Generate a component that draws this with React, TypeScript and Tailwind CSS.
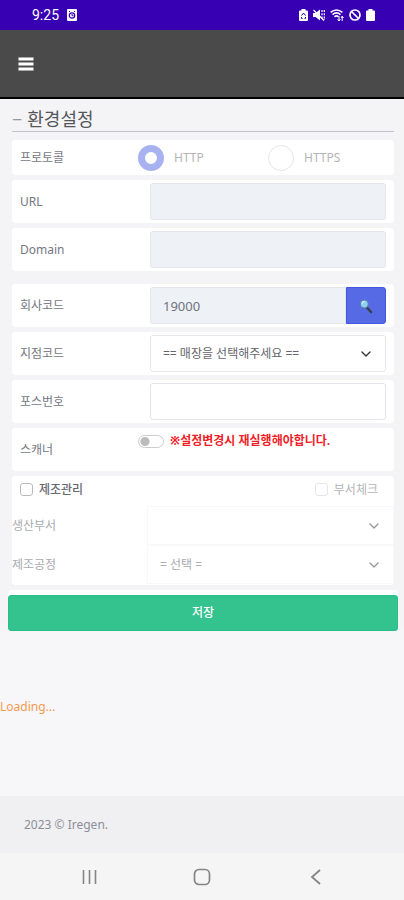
import type { ReactNode } from "react";
import { ChevronDown } from "lucide-react";

const inputClass = "h-[37px] w-full min-w-0 rounded-[3px] border border-[#e2e5ec] px-3 text-[13px] text-[#70747d]";

function StatusBar() {
  return (
    <div className="flex h-[30px] items-center justify-between bg-[#3700b3] pl-8 pr-[29px] text-white">
      <div className="flex items-center gap-2">
        <span className="font-[Roboto] text-sm">9:25</span>
        <svg className="h-3 w-[10px]" viewBox="0 0 10 12" fill="none">
          <rect width="10" height="12" rx="1" fill="#fff" />
          <circle cx="5" cy="6.5" r="2.7" stroke="#3700b3" strokeWidth="1.2" />
          <path d="M5 5v1.7h1.5M2 2.5h1M7 2.5h1" stroke="#3700b3" strokeWidth="1" />
        </svg>
      </div>
      <div className="flex items-center gap-[5px]">
        <svg className="h-3 w-[9px]" viewBox="0 0 9 12">
          <path d="M2.5 1.5V0h4v1.5H8q1 0 1 1V11q0 1-1 1H1q-1 0-1-1V2.5q0-1 1-1z" fill="#fff" />
          <path d="M2.5 6.5 4.5 4l2 2.5M2.5 8v1.5h1M6.5 8v1.5h-1" stroke="#3700b3" fill="none" />
        </svg>
        <svg className="h-3 w-3" viewBox="0 0 12 12" fill="none" stroke="#fff">
          <path d="M0 4h2.5L7 .5v11L2.5 8H0z" fill="#fff" stroke="none" />
          <path d="M.5 1 11 11.5" strokeWidth="1.3" />
          <path d="M9 1v9M11.3 1v10" strokeDasharray="2 1.2" strokeWidth="1.2" />
        </svg>
        <svg className="h-3 w-[14px]" viewBox="0 0 14 12" fill="none" stroke="#fff">
          <path d="M.6 3.4Q6.5-1.3 12.4 3.4M2.5 5.6q4-3.3 8 0M4.5 7.8q2-1.7 4 0" strokeWidth="1.6" />
          <path d="M9 7v5M7.6 10.2 9 12l1.3-1.8M12.2 12V7.2M11 9l1.2-1.8L13.5 9" strokeWidth="1" />
        </svg>
        <svg className="h-3 w-3" viewBox="0 0 12 12" fill="none" stroke="#fff" strokeWidth="1.7">
          <circle cx="6" cy="6" r="5" />
          <path d="m2.5 2.5 7 7" />
        </svg>
        <svg className="h-3 w-[9px]" viewBox="0 0 9 12">
          <path d="M2.5 1.5V0h4v1.5H8q1 0 1 1V11q0 1-1 1H1q-1 0-1-1V2.5q0-1 1-1z" fill="#fff" />
        </svg>
      </div>
    </div>
  );
}

function Row({ id, label, children }: { id: string; label: string; children: ReactNode }) {
  return (
    <div className="flex h-[43px] items-center rounded-[4px] bg-white px-2">
      <label htmlFor={id} className="w-[130px] shrink-0 text-[#74777f]">{label}</label>
      <div className="flex min-w-0 flex-1">{children}</div>
    </div>
  );
}

function Select({ id, text, className, disabled }: { id: string; text: string; className: string; disabled?: boolean }) {
  return (
    <div className="relative min-w-0 flex-1">
      <select id={id} disabled={disabled} className={`w-full appearance-none border bg-white px-3 opacity-100 ${className}`}>
        <option>{text}</option>
      </select>
      <ChevronDown
        className={`pointer-events-none absolute right-3 top-1/2 h-4 w-4 -translate-y-1/2 ${disabled ? "text-[#999]" : "text-[#333]"}`}
      />
    </div>
  );
}

function Radio({ label, checked }: { label: string; checked?: boolean }) {
  return (
    <label className="flex w-[130px] shrink-0 items-center gap-[10px] text-[#b4b5b9]">
      <input
        type="radio"
        name="protocol"
        disabled
        defaultChecked={checked}
        className="h-[26px] w-[26px] appearance-none rounded-full border border-[#e6e6e8] bg-white checked:border-[7px] checked:border-[#a9b2f0]"
      />
      {label}
    </label>
  );
}

export default function App() {
  return (
    <div className="flex min-h-screen flex-col bg-[#f7f7f9] font-['Noto_Sans','Noto_Sans_CJK_KR',sans-serif] text-xs">
      <StatusBar />
      <header className="flex h-[69px] items-center border-b-2 border-black bg-[#4a4a4a] px-[18px]">
        <button aria-label="메뉴" className="flex h-4 w-4 items-center">
          <svg className="h-4 w-4" viewBox="0 0 16 16" stroke="#fff" strokeWidth="2.8">
            <path d="M.5 3h15M.5 8h15M.5 13h15" />
          </svg>
        </button>
      </header>

      <main className="flex flex-1 flex-col">
        <div className="flex flex-col gap-1 bg-linear-to-b from-[#f4f4f6] from-95% to-[#f7f7f9] pb-4 pl-2 pr-[6px]">
          <h1 className="mx-1 mb-1 flex h-[33px] items-center gap-[5px] border-b border-[#c3c4c8] pt-2 text-lg text-[#55565a]">
            <span className="text-[#999]">−</span> 환경설정
          </h1>

          <form className="flex flex-col gap-[5px]">
            <div className="mx-1 flex flex-col gap-[5px]">
              <div role="radiogroup" aria-labelledby="protocol" className="flex h-[35px] items-center rounded-[4px] bg-white pl-2">
                <span id="protocol" className="w-[118px] shrink-0 text-[#74777f]">프로토콜</span>
                <Radio label="HTTP" checked />
                <Radio label="HTTPS" />
              </div>
              <Row id="url" label="URL">
                <input id="url" disabled className={`${inputClass} bg-[#eef1f6]`} />
              </Row>
              <Row id="domain" label="Domain">
                <input id="domain" disabled className={`${inputClass} bg-[#eef1f6]`} />
              </Row>
            </div>

            <div className="mx-1 mt-2 flex flex-col gap-[5px]">
              <Row id="company" label="회사코드">
                <input id="company" readOnly defaultValue="19000" className={`${inputClass} rounded-r-none bg-[#eef1f6]`} />
                <button type="button" aria-label="검색" className="flex w-10 shrink-0 items-center justify-center rounded-r-[3px] border border-[#4257df] bg-[#566ae6]">
                  <svg className="h-4 w-4" viewBox="0 0 16 16">
                    <path d="m8.5 9 4.5 5" stroke="#38404f" strokeWidth="2.6" strokeLinecap="round" />
                    <circle cx="6.3" cy="6" r="4" fill="#8fd0f5" stroke="#617fa6" />
                    <path d="M4 5.5Q4.5 3.5 6.5 3.6" stroke="#d7f1ff" fill="none" strokeWidth="1.2" />
                  </svg>
                </button>
              </Row>
              <Row id="branch" label="지점코드">
                <Select id="branch" text="== 매장을 선택해주세요 ==" className="h-[37px] rounded-[3px] border-[#e6e7ec] text-[#62656b]" />
              </Row>
              <Row id="pos" label="포스번호">
                <input id="pos" className={`${inputClass} bg-white`} />
              </Row>
              <div className="flex h-[43px] rounded-[4px] bg-white px-2">
                <label htmlFor="scanner" className="flex w-[118px] shrink-0 items-center text-[#74777f]">스캐너</label>
                <div className="flex h-[26px] items-center gap-[6px]">
                  <input
                    id="scanner"
                    type="checkbox"
                    role="switch"
                    className="h-[13px] w-[26px] appearance-none rounded-full border border-[#ccc] bg-white bg-[radial-gradient(circle_at_6px_50%,#bbb_4px,transparent_5px)]"
                  />
                  <strong className="font-bold text-[#f01e28]">※설정변경시 재실행해야합니다.</strong>
                </div>
              </div>

              <div className="rounded-[4px] bg-white pb-px">
                <div className="flex h-[27px] items-center justify-between pl-2 pr-4">
                  <label className="flex items-center gap-[6px] font-medium text-[#666970]">
                    <input type="checkbox" className="h-[13px] w-[13px] appearance-none rounded-[3px] border border-[#bbb]" />
                    제조관리
                  </label>
                  <label className="flex items-center gap-[6px] text-[#b4b5b9]">
                    <input type="checkbox" disabled className="h-[13px] w-[13px] appearance-none rounded-[3px] border border-[#e5e5e7]" />
                    부서체크
                  </label>
                </div>
                <div className="mt-[3px] flex items-center">
                  <label htmlFor="dept" className="w-[135px] shrink-0 text-[#aaabaf]">생산부서</label>
                  <Select id="dept" text="" disabled className="h-[39px] border-[#f8f8fa] text-[#aaabaf]" />
                </div>
                <div className="flex items-center">
                  <label htmlFor="process" className="w-[135px] shrink-0 text-[#aaabaf]">제조공정</label>
                  <Select id="process" text="= 선택 =" disabled className="h-[39px] border-[#f8f8fa] text-[#aaabaf]" />
                </div>
              </div>
            </div>

            <div className="flex flex-col rounded-[4px] bg-white pt-[5px]">
              <button className="h-9 rounded-[3px] border border-[#26bf86] bg-[#34c38f] font-medium text-white">저장</button>
            </div>
          </form>
        </div>

        <p className="mt-[52px] text-[#f59a50]">Loading...</p>
      </main>

      <footer className="flex h-[57px] items-center bg-[#f0f0f3] px-6 text-[#8b8e96]">2023 © Iregen.</footer>
      <nav className="flex h-[47px] items-center justify-between bg-[#f5f5f5] px-20">
        <button aria-label="최근 앱" className="h-5 w-5">
          <svg viewBox="0 0 20 20" stroke="#858585" strokeWidth="1.6">
            <path d="M3.5 3v14M9.5 3v14M15.5 3v14" />
          </svg>
        </button>
        <button aria-label="홈" className="h-5 w-5">
          <svg viewBox="0 0 20 20" fill="none" stroke="#858585" strokeWidth="1.7">
            <rect x="2.5" y="2.5" width="15" height="15" rx="4.5" />
          </svg>
        </button>
        <button aria-label="뒤로" className="h-5 w-5">
          <svg viewBox="0 0 20 20" fill="none" stroke="#858585" strokeWidth="1.8">
            <path d="m16 3-8 7 8 7" />
          </svg>
        </button>
      </nav>
    </div>
  );
}
